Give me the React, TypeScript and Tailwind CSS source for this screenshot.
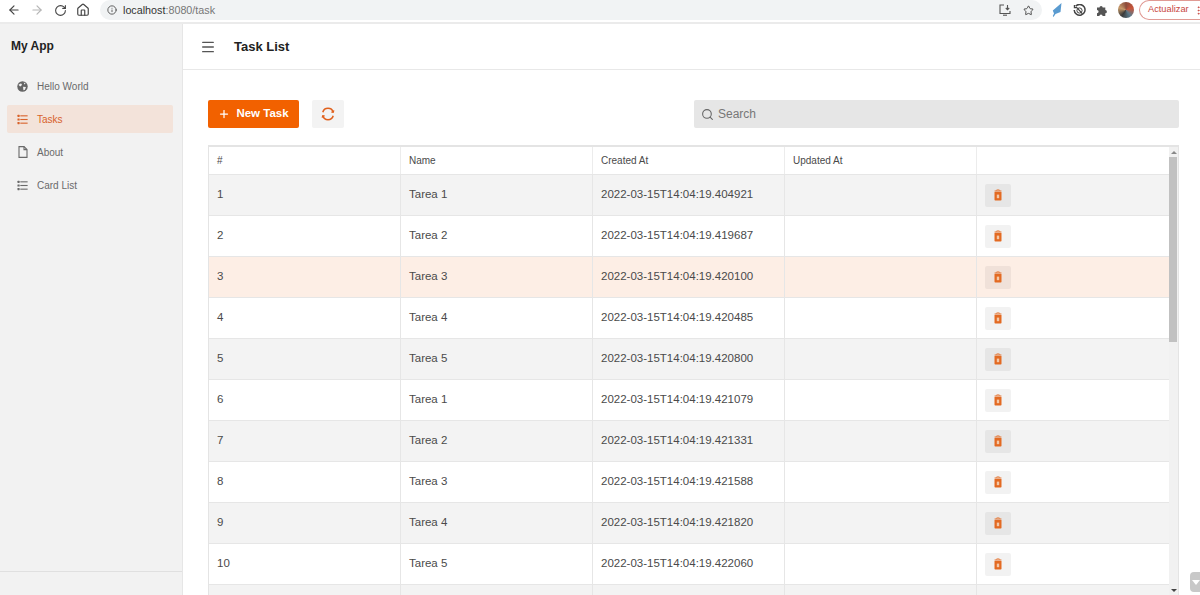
import { ArrowLeft, ArrowRight, RotateCw, Home, Info, Star, Menu, Plus, Search, MoreVertical } from "lucide-react";

type Task = {
  id: number;
  name: string;
  createdAt: string;
};

const tasks: Task[] = [
  { id: 1, name: "Tarea 1", createdAt: "2022-03-15T14:04:19.404921" },
  { id: 2, name: "Tarea 2", createdAt: "2022-03-15T14:04:19.419687" },
  { id: 3, name: "Tarea 3", createdAt: "2022-03-15T14:04:19.420100" },
  { id: 4, name: "Tarea 4", createdAt: "2022-03-15T14:04:19.420485" },
  { id: 5, name: "Tarea 5", createdAt: "2022-03-15T14:04:19.420800" },
  { id: 6, name: "Tarea 1", createdAt: "2022-03-15T14:04:19.421079" },
  { id: 7, name: "Tarea 2", createdAt: "2022-03-15T14:04:19.421331" },
  { id: 8, name: "Tarea 3", createdAt: "2022-03-15T14:04:19.421588" },
  { id: 9, name: "Tarea 4", createdAt: "2022-03-15T14:04:19.421820" },
  { id: 10, name: "Tarea 5", createdAt: "2022-03-15T14:04:19.422060" },
];

function ListIcon({ className }: { className: string }) {
  return (
    <svg viewBox="0 0 12 12" className={className} fill="currentColor">
      <rect x="0.5" y="0.8" width="2.4" height="2.4" rx="0.5" />
      <rect x="0.5" y="4.8" width="2.4" height="2.4" rx="0.5" />
      <rect x="0.5" y="8.8" width="2.4" height="2.4" rx="0.5" />
      <rect x="3.6" y="1.4" width="8" height="1.2" />
      <rect x="3.6" y="5.4" width="8" height="1.2" />
      <rect x="3.6" y="9.4" width="8" height="1.2" />
    </svg>
  );
}

function GlobeIcon() {
  return (
    <svg viewBox="0 0 12 12" className="h-[11px] w-[11px] text-[#666]">
      <circle cx="6" cy="6" r="5.7" fill="currentColor" />
      <path d="M1.6 4.2 4 2.6 5.4 3.4 4.8 5.2 3.4 6Z M6.6 6.4 9.8 6.6 8.6 9.6 7 10.2Z M7.4 1.6 9.4 2.8 8 3.8Z" fill="#f2f2f2" />
    </svg>
  );
}

function PageIcon() {
  return (
    <svg viewBox="0 0 10 12" className="h-[12px] w-[10px]" fill="none" stroke="currentColor" strokeWidth="1.1">
      <path d="M1 .6h5l3 3v7.8H1Z" />
      <path d="M6 .6v3h3" />
    </svg>
  );
}

function TrashIcon() {
  return (
    <svg viewBox="0 0 8 12" className="h-[12px] w-[8px] text-[#e36a22]" fill="currentColor">
      <path d="M2.6 1.4V.4h2.8v1h2v1.2H.6V1.4Zm.6 0h1.6V1H3.2Z" />
      <path d="M.5 3h7v7.8c0 .5-.3.8-.8.8H1.3c-.5 0-.8-.3-.8-.8Z" />
      <rect x="2.8" y="5.6" width="2.4" height="3.6" fill="#f4c9a8" />
    </svg>
  );
}

function RefreshIcon() {
  return (
    <svg viewBox="0 0 14 14" className="h-[14px] w-[14px] text-[#e0601c]" fill="none" stroke="currentColor" strokeWidth="1.5">
      <path d="M1.8 5.2A5.4 5.4 0 0 1 12.2 5.2" />
      <path d="M12.2 8.8A5.4 5.4 0 0 1 1.8 8.8" />
      <path d="M12.9 3.4 12.2 5.4 10.2 5" strokeWidth="1.2" />
      <path d="M1.1 10.6 1.8 8.6 3.8 9" strokeWidth="1.2" />
    </svg>
  );
}

function InstallIcon() {
  return (
    <svg viewBox="0 0 12 12" className="ml-auto h-[12px] w-[12px] text-[#555]" fill="none" stroke="currentColor" strokeWidth="1.1">
      <path d="M5 1H1v8.5h10V7" />
      <path d="M8.5 1v4.5M6.8 4 8.5 5.8 10.2 4" />
      <path d="M4 11.2h4" />
    </svg>
  );
}

function SyncOffIcon() {
  return (
    <svg viewBox="0 0 13 13" className="ml-[11px] h-[13px] w-[13px] text-[#444]" fill="none" stroke="currentColor" strokeWidth="1.5">
      <path d="M2.6 2.2A5.4 5.4 0 1 1 1.2 6" />
      <path d="M1.4 1v2.6H4" strokeWidth="1.2" />
      <path d="M4 3.6 9.4 9.8" strokeWidth="1.2" />
      <circle cx="6.5" cy="6.5" r="2.6" strokeWidth="1" />
    </svg>
  );
}

function PuzzleIcon() {
  return (
    <svg viewBox="0 0 13 13" className="ml-[10px] h-[13px] w-[13px] text-[#555]" fill="currentColor">
      <path d="M1 3.5h2.5a1.6 1.6 0 1 1 3.2 0h2.6v2.6a1.6 1.6 0 1 1 0 3.2V12H6.6a1.6 1.6 0 1 0-3.2 0H1V9.2a1.6 1.6 0 1 0 0-3.2Z" />
    </svg>
  );
}

function BrowserBar() {
  return (
    <div className="flex h-[24px] shrink-0 items-center border-b-2 border-[#ebebeb] bg-white pb-[2px] pl-[7px] text-[#555]">
      <ArrowLeft className="h-[14px] w-[14px] text-[#444]" />
      <ArrowRight className="ml-[9px] h-[14px] w-[14px] text-[#b5b5b5]" />
      <RotateCw className="ml-[10px] h-[13px] w-[13px] text-[#444]" />
      <Home className="ml-[9px] h-[14px] w-[14px] text-[#444]" />
      <div className="ml-[10px] flex h-[20px] w-[942px] items-center rounded-full bg-[#f1f3f4] pl-[7px]">
        <Info className="h-[10px] w-[10px] text-[#444]" />
        <span className="ml-[6px] text-[10.75px] text-[#333]">localhost</span>
        <span className="text-[10.75px] text-[#777]">:8080/task</span>
        <InstallIcon />
        <Star className="ml-[12px] mr-[8px] h-[11px] w-[11px] text-[#444]" />
      </div>
      <svg viewBox="0 0 10 14" className="ml-[10px] h-[14px] w-[10px] text-[#5a9bd0]" fill="currentColor">
        <path d="M9.5 0 8.5 9 3.5 11 1.5 14 .8 13 2 10.5.8 7.5Z" />
      </svg>
      <SyncOffIcon />
      <PuzzleIcon />
      <div className="ml-[9px] h-[16px] w-[16px] rounded-full bg-[conic-gradient(#8a4b3a,#c9553a,#5c7a8a,#3a3a3a,#c79a6a,#8a4b3a)]" />
      <div className="ml-[5px] flex h-[20px] w-[61px] items-center rounded-l-full border border-r-0 border-[#e09a94] pl-[8px] text-[9.25px] text-[#c8473f]">
        Actualizar
        <MoreVertical className="ml-auto h-[11px] w-[11px] shrink-0 translate-x-[4px] text-[#c8473f]" />
      </div>
    </div>
  );
}

function Sidebar() {
  return (
    <aside className="flex w-[183px] shrink-0 flex-col border-r border-[#e6e6e6] bg-[#f2f2f2]">
      <div className="pl-[11px] pt-[15px] text-[12px] font-bold leading-[15px] text-[#222]">My App</div>
      <nav className="mt-[18px] flex flex-col gap-[5px] pl-[7px] pr-[9px]">
        <div className="flex h-[28px] items-center pl-[10px] text-[10px] text-[#6a6a6a]">
          <GlobeIcon />
          <span className="ml-[9px]">Hello World</span>
        </div>
        <div className="flex h-[28px] items-center rounded-[2px] bg-[#f3e3da] pl-[10px] text-[10px] text-[#d8622a]">
          <ListIcon className="h-[11px] w-[11px] shrink-0" />
          <span className="ml-[9px]">Tasks</span>
        </div>
        <div className="flex h-[28px] items-center pl-[11px] text-[10px] text-[#6a6a6a]">
          <PageIcon />
          <span className="ml-[9px]">About</span>
        </div>
        <div className="flex h-[28px] items-center pl-[10px] text-[10px] text-[#6a6a6a]">
          <ListIcon className="h-[11px] w-[11px] shrink-0" />
          <span className="ml-[9px]">Card List</span>
        </div>
      </nav>
      <div className="mt-auto h-[24px] border-t border-[#e0e0e0]" />
    </aside>
  );
}

function TaskTable() {
  return (
    <div className="mt-[17px] flex min-h-0 flex-1 overflow-hidden border-l border-r border-t-2 border-[#e4e4e4]">
      <table className="w-[960px] shrink-0 table-fixed border-separate border-spacing-0 self-start text-[#4a4a4a]">
        <thead>
          <tr className="h-[27px] text-[10px]">
            {["#", "Name", "Created At", "Updated At", ""].map((label) => (
              <th key={label} className="border-r border-[#ececec] pl-[8px] text-left font-normal last:border-r-0">
                {label}
              </th>
            ))}
          </tr>
        </thead>
        <tbody>
          {tasks.map((task) => {
            const rowColor =
              task.id === 3 ? "bg-[#fdeee5]" : task.id % 2 === 1 ? "bg-[#f3f3f3]" : "bg-white";
            return (
              <tr key={task.id} className={`h-[41px] text-[11.5px] ${rowColor}`}>
                <td className="border-r border-t border-[#e6e6e6] pl-[8px]">{task.id}</td>
                <td className="border-r border-t border-[#e6e6e6] pl-[8px]">{task.name}</td>
                <td className="border-r border-t border-[#e6e6e6] pl-[8px]">{task.createdAt}</td>
                <td className="border-r border-t border-[#e6e6e6]"></td>
                <td className="border-t border-[#e6e6e6] pl-[8px]">
                  <div className="flex h-[23px] w-[26px] items-center justify-center rounded-[2px] bg-[#000]/[0.05]">
                    <TrashIcon />
                  </div>
                </td>
              </tr>
            );
          })}
          <tr className="h-[41px] bg-[#f3f3f3]">
            <td className="border-r border-t border-[#e6e6e6]"></td>
            <td className="border-r border-t border-[#e6e6e6]"></td>
            <td className="border-r border-t border-[#e6e6e6]"></td>
            <td className="border-r border-t border-[#e6e6e6]"></td>
            <td className="border-t border-[#e6e6e6]"></td>
          </tr>
        </tbody>
      </table>
      <div className="flex w-[9px] flex-col bg-[#f1f1f1]">
        <div className="flex h-[10px] items-center justify-center">
          <div className="h-0 w-0 border-x-[3px] border-b-[3px] border-x-transparent border-b-[#888]" />
        </div>
        <div className="h-[185px] w-[8px] bg-[#c1c1c1]" />
        <div className="mt-auto flex h-[10px] items-center justify-center">
          <div className="h-0 w-0 border-x-[3px] border-t-[3px] border-x-transparent border-t-[#444]" />
        </div>
      </div>
    </div>
  );
}

export default function App() {
  return (
    <div className="relative flex h-[595px] w-[1200px] flex-col overflow-hidden bg-white font-['Liberation_Sans',Arial,sans-serif]">
      <BrowserBar />
      <div className="flex min-h-0 flex-1">
        <Sidebar />
        <main className="flex min-w-0 flex-1 flex-col">
          <header className="flex h-[46px] shrink-0 items-center border-b border-[#e8e8e8] pl-[17px]">
            <Menu className="h-[16px] w-[16px] text-[#555]" />
            <h1 className="ml-[18px] text-[13px] font-bold text-[#222]">Task List</h1>
          </header>
          <div className="flex min-h-0 flex-1 flex-col pl-[25px] pr-[21px] pt-[30px]">
            <div className="flex h-[28px] shrink-0 items-center">
              <button className="flex h-[28px] w-[91px] items-center justify-center rounded-[2px] bg-[#f26100] text-[11.5px] font-bold text-white">
                <Plus className="mr-[6px] h-[12px] w-[12px]" strokeWidth={2.5} />
                New Task
              </button>
              <button className="ml-[13px] flex h-[28px] w-[32px] items-center justify-center rounded-[2px] bg-[#f3f3f3]">
                <RefreshIcon />
              </button>
              <div className="ml-auto flex h-[28px] w-[485px] items-center rounded-[2px] bg-[#e6e6e6] pl-[7px]">
                <Search className="h-[13px] w-[13px] text-[#666]" />
                <span className="ml-[4px] text-[12px] text-[#777]">Search</span>
              </div>
            </div>
            <TaskTable />
          </div>
        </main>
      </div>
      <div className="absolute bottom-[3px] right-0 flex h-[20px] w-[10px] items-center overflow-hidden rounded-l-[4px] bg-[#c8c8c8] pl-[2px]">
        <div className="h-0 w-0 border-x-[4px] border-t-[5px] border-x-transparent border-t-white" />
      </div>
    </div>
  );
}
